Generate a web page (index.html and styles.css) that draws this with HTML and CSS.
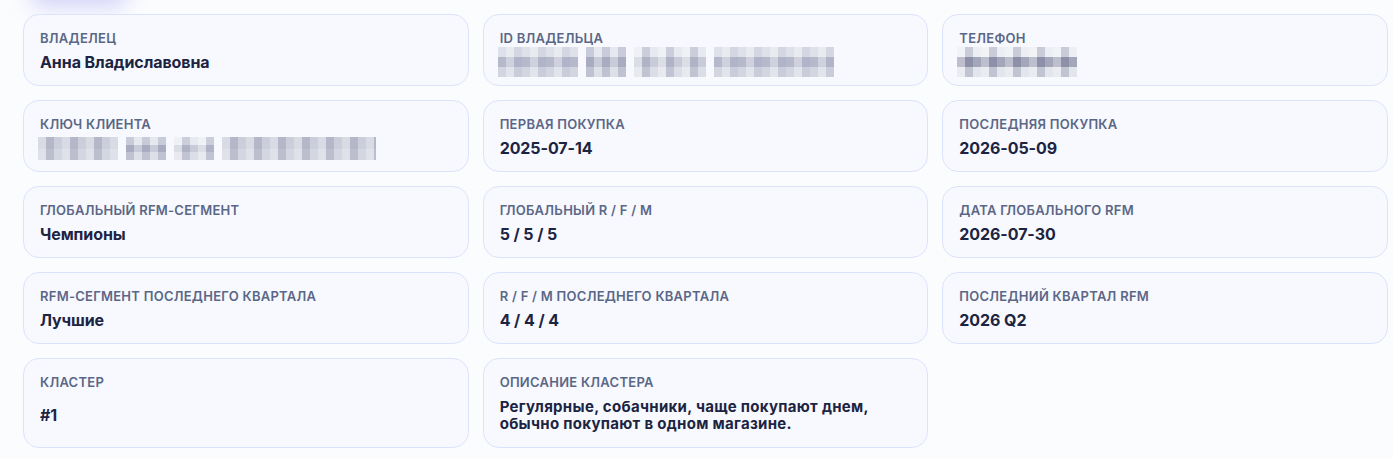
FILE: index.html
```html
<!DOCTYPE html>
<html lang="ru">
<head>
<meta charset="utf-8">
<title>Клиент</title>
<link rel="stylesheet" href="styles.css">
</head>
<body>
<div class="page">
  <div class="topbar"><div class="top-btn"></div></div>
  <div class="grid">
    <div class="card">
      <div class="label">Владелец</div>
      <div class="value">Анна Владиславовна</div>
    </div>
    <div class="card">
      <div class="label">ID владельца</div>
      <div class="value">
        <span class="mosaic m3">
          <span class="w w-a" style="width:80px"></span>
          <span class="w w-b" style="width:40px"></span>
          <span class="w w-c" style="width:72px"></span>
          <span class="w w-a" style="width:120px"></span>
        </span>
      </div>
    </div>
    <div class="card">
      <div class="label">Телефон</div>
      <div class="value">
        <span class="mosaic m3">
          <span class="w w-d" style="width:120px"></span>
        </span>
      </div>
    </div>

    <div class="card">
      <div class="label">Ключ клиента</div>
      <div class="value">
        <span class="mosaic m2">
          <span class="w w-e" style="width:80px"></span>
          <span class="w w-b" style="width:40px"></span>
          <span class="w w-c" style="width:40px"></span>
          <span class="w w-e" style="width:154px"></span>
        </span>
      </div>
    </div>
    <div class="card">
      <div class="label">Первая покупка</div>
      <div class="value">2025-07-14</div>
    </div>
    <div class="card">
      <div class="label">Последняя покупка</div>
      <div class="value">2026-05-09</div>
    </div>

    <div class="card">
      <div class="label">Глобальный RFM-сегмент</div>
      <div class="value">Чемпионы</div>
    </div>
    <div class="card">
      <div class="label">Глобальный R / F / M</div>
      <div class="value">5 / 5 / 5</div>
    </div>
    <div class="card">
      <div class="label">Дата глобального RFM</div>
      <div class="value">2026-07-30</div>
    </div>

    <div class="card">
      <div class="label">RFM-сегмент последнего квартала</div>
      <div class="value">Лучшие</div>
    </div>
    <div class="card">
      <div class="label">R / F / M последнего квартала</div>
      <div class="value">4 / 4 / 4</div>
    </div>
    <div class="card">
      <div class="label">Последний квартал RFM</div>
      <div class="value">2026 Q2</div>
    </div>

    <div class="card">
      <div class="label">Кластер</div>
      <div class="value">#1</div>
    </div>
    <div class="card">
      <div class="label">Описание кластера</div>
      <div class="value desc">Регулярные, собачники, чаще покупают днем, обычно покупают в одном магазине.</div>
    </div>
  </div>
</div>
</body>
</html>
```

FILE: styles.css
```css
* { box-sizing: border-box; }
html, body { margin: 0; padding: 0; }
body {
  background: #fbfcfe;
  font-family: Inter, "Noto Sans", sans-serif;
  color: #1c2442;
  overflow: hidden;
}
.page {
  padding: 14px 5px 0 23px;
}
.topbar {
  height: 0;
  display: flex;
}
.top-btn {
  margin-top: -56px;
  margin-left: 8px;
  width: 96px;
  height: 40px;
  border-radius: 12px;
  background: #ffffff;
  box-shadow: 0 8px 22px rgba(112, 110, 235, 0.30);
}
.grid {
  display: grid;
  grid-template-columns: repeat(3, 1fr);
  column-gap: 14px;
  row-gap: 14px;
  width: 1365px;
}
.card {
  display: flex;
  flex-direction: column;
  padding: 15px 16px 14px 16px;
  min-height: 72px;
  background: #f7f9ff;
  border: 1px solid #dde3fb;
  border-radius: 16px;
}
.label {
  font-size: 13px;
  line-height: 16px;
  font-weight: 600;
  letter-spacing: 0.02em;
  text-transform: uppercase;
  color: #5b6786;
}
.value {
  flex: 1;
  display: flex;
  align-items: center;
  margin-top: 7px;
  font-size: 16px;
  line-height: 18px;
  font-weight: 700;
  color: #1c2442;
  letter-spacing: -0.005em;
}
.value.desc {
  font-size: 15px;
  line-height: 17px;
  letter-spacing: 0.3px;
  padding-top: 1px;
  padding-bottom: 1px;
}
.mosaic {
  display: flex;
  gap: 8px;
  margin-left: -2px;
}
.m3 .w { height: 30px; margin-top: -6px; margin-bottom: -6px; }
.m2 .w { height: 23px; margin-top: -2px; margin-bottom: -3px; }
.w {
  display: block;
}
.w-a {
  background:
    repeating-linear-gradient(90deg, rgba(255,255,255,0.0) 0 8px, rgba(255,255,255,0.35) 8px 16px, rgba(150,155,180,0.15) 16px 24px),
    linear-gradient(180deg, #dfe1ea 0 33%, #b6b9cc 33% 66%, #d3d5e1 66% 100%);
}
.w-b {
  background:
    repeating-linear-gradient(90deg, rgba(140,145,170,0.25) 0 8px, rgba(255,255,255,0.3) 8px 16px),
    linear-gradient(180deg, #dcdee8 0 33%, #b2b5c8 33% 66%, #d0d2de 66% 100%);
}
.w-c {
  background:
    repeating-linear-gradient(90deg, rgba(255,255,255,0.45) 0 8px, rgba(130,135,160,0.25) 8px 16px, rgba(255,255,255,0.15) 16px 24px),
    linear-gradient(180deg, #e4e6ee 0 33%, #bfc2d2 33% 66%, #d6d8e3 66% 100%);
}
.w-d {
  background:
    repeating-linear-gradient(90deg, rgba(255,255,255,0.35) 0 8px, rgba(100,105,135,0.25) 8px 16px, rgba(255,255,255,0.1) 16px 24px),
    linear-gradient(180deg, #ebedf3 0 33%, #9a9db3 33% 66%, #e0e2ea 66% 100%);
}
.w-e {
  background:
    repeating-linear-gradient(90deg, rgba(255,255,255,0.3) 0 8px, rgba(120,125,150,0.25) 8px 16px, rgba(255,255,255,0.05) 16px 24px),
    linear-gradient(180deg, #c9cbd8 0 50%, #d2d4df 50% 100%);
}
```
